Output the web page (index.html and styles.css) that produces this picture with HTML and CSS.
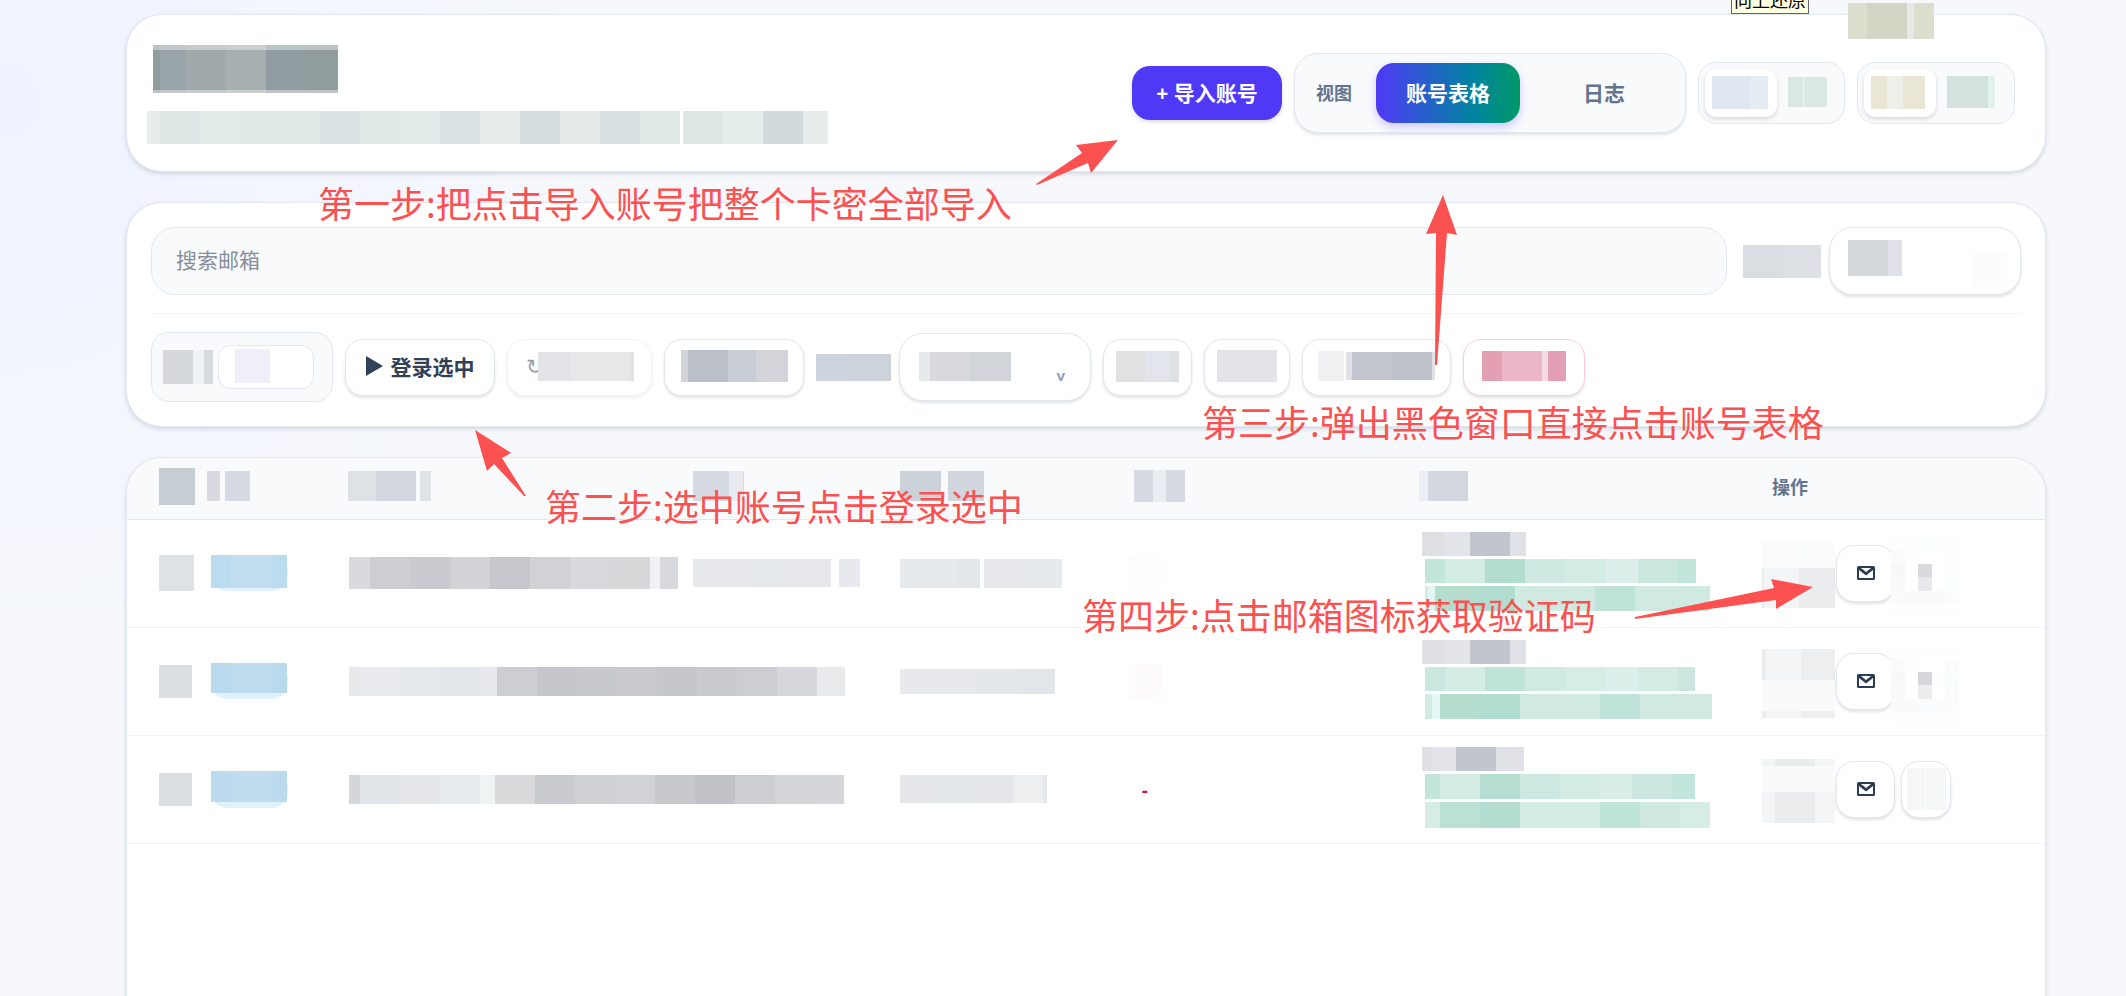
FILE: index.html
```
<!DOCTYPE html>
<html lang="zh-CN">
<head>
  <meta charset="UTF-8">
  <title>账号表格</title>
  <link rel="stylesheet" href="styles.css">
</head>
<body>
  <main class="page">
    <header class="card topbar">
      <div class="brand">
        <span class="mask title-mask" data-h="48" data-seg="7:#919c9e 26:#99a4aa 40:#a2a9ac 40:#a8afb1 40:#929da3 32:#919c9e"></span>
        <span class="mask" data-h="33" data-seg="13:#e7ecec 40:#dde7e6 40:#e2ece8 40:#dee8e6 40:#dfe8e7 40:#dae2e4 40:#dfe8e7 40:#e2ecea 40:#d8e1e4 40:#e6ece9 40:#d6dfe0 40:#e4ebea 40:#d8e1e2 40:#dee8e6 3:#fff 40:#dee7e5 40:#e3edeb 40:#d1dadc 25:#e6eceb"></span>
      </div>
      <div class="top-actions">
        <button class="btn-primary">+ 导入账号</button>
        <div class="tabs">
          <span class="tabs-label">视图</span>
          <button class="tab active">账号表格</button>
          <button class="tab">日志</button>
        </div>
        <div class="switch">
          <button class="switch-item on" aria-label="1"><span class="mask" data-h="33" data-seg="38:#e0e6f2 18:#e4edf4"></span></button>
          <button class="switch-item" aria-label="2"><span class="mask" data-h="30" data-seg="15:#dae8e5 1:#eef5f4 23:#dae8e5"></span></button>
        </div>
        <div class="switch wide">
          <button class="switch-item on" aria-label="1"><span class="mask" data-h="33" data-seg="16:#e9e6d5 16:#edf0e8 22:#e9e6d5"></span></button>
          <button class="switch-item" aria-label="2"><span class="mask" data-h="32" data-seg="41:#d3e1df 7:#e2f2ef"></span></button>
        </div>
      </div>
    </header>

    <section class="card filters">
      <div class="search-row">
        <input class="search" type="text" placeholder="搜索邮箱" aria-label="搜索邮箱">
        <span class="mask" data-h="33" data-seg="40:#dadde2 38:#dde0e5"></span>
        <div class="select-box">
          <select aria-label="1"><option></option></select>
          <div class="select-face high">
            <span class="mask" data-h="36" data-seg="40:#d4d8db 14:#dfe2e8"></span>
            <span class="mask low" data-h="34" data-seg="35:#fcfcfc"></span>
          </div>
        </div>
      </div>
      <div class="tool-row">
        <div class="count-box">
          <span class="mask" data-h="34" data-seg="30:#d5d8dc 11:#eff2f5 9:#d6d9dd"></span>
          <div class="count-field">
            <input type="text" aria-label="1">
            <span class="mask" data-h="34" data-seg="35:#f0eef9"></span>
          </div>
        </div>
        <button class="btn"><svg class="play" viewBox="0 0 17 20"><path d="M0 0L17 10L0 20Z"/></svg>登录选中</button>
        <button class="btn w-refresh" disabled><span class="refresh">↻</span><span class="mask" data-h="29" data-seg="33:#c9cad1 20:#d3d3d6 38:#d2d3d4 5:#c9cacf"></span></button>
        <button class="btn w-140" aria-label="3"><span class="mask" data-h="32" data-seg="7:#d3d4d9 40:#bbbfc7 28:#c8cdd6 32:#d3d3d9"></span></button>
        <span class="mask tool-label" data-h="27" data-seg="31:#cdd4dd 44:#ced2db"></span>
        <div class="select-box">
          <select aria-label="2"><option></option></select>
          <div class="select-face">
            <span class="mask" data-h="29" data-seg="11:#e8e9ed 40:#d8d8dd 41:#d1d5d9"></span>
            <span class="chevron">v</span>
          </div>
        </div>
        <button class="btn w-89" aria-label="4"><span class="mask" data-h="31" data-seg="29:#e0e1e3 25:#e2e5eb 9:#e0e1e3"></span></button>
        <button class="btn w-86" aria-label="5"><span class="mask" data-h="32" data-seg="60:#e2e4e8"></span></button>
        <button class="btn w-149" aria-label="6"><span class="mask" data-h="30" data-seg="26:#f1f1f3"></span><span class="mask" data-h="28" data-seg="6:#dfe1e7 40:#c3c6cf 40:#bec2cb 3:#dfe1e7"></span></button>
        <button class="btn danger w-122" aria-label="7"><span class="mask" data-h="30" data-seg="20:#e4a0b3 40:#ebb6c6 6:#f4dbe5 18:#e4a0b3"></span></button>
      </div>
    </section>

    <section class="card table-card">
      <table>
        <colgroup>
          <col class="c-check"><col class="c-tag"><col class="c-mail"><col class="c-key"><col class="c-time"><col class="c-code"><col class="c-status"><col>
        </colgroup>
        <thead>
          <tr>
            <th><span class="mask" data-h="37" data-seg="36:#c6ced4"></span></th>
            <th><span class="mask" data-h="30" data-seg="13:#d7dbe1 5:#f8fafc 25:#d6dae2"></span></th>
            <th><span class="mask" data-h="30" data-seg="28:#dde2e6 40:#d4d8e1 4:#f8fafc 11:#dee3e7"></span></th>
            <th><span class="mask" data-h="30" data-seg="36:#d6dbe3 14:#e7ebf0 1:#d6dbe3"></span></th>
            <th><span class="mask" data-h="30" data-seg="41:#cbd2da 7:#f8fafc 36:#d1d6de"></span></th>
            <th><span class="mask pad-code" data-h="32" data-seg="19:#d6dbe3 13:#e8edf2 19:#d6dbe3"></span></th>
            <th><span class="mask" data-h="30" data-seg="9:#e9eff4 40:#d3d7df"></span></th>
            <th><span class="th-text">操作</span></th>
          </tr>
        </thead>
        <tbody>
          <tr>
            <td><span class="mask" data-h="36" data-seg="35:#dfe2e5"></span></td>
            <td><span class="tag"><span class="mask" data-h="33" data-seg="20:#bbdbef 40:#c3def0 16:#bbdbef"></span></span></td>
            <td><span class="mask pad-mail" data-h="32" data-seg="21:#d9d9de 40:#cfcdd2 40:#cacbd0 40:#d2d3d7 40:#c7c8cd 40:#d1d2d6 40:#d8d9dd 40:#d6d7d8 10:#f0f1f4 18:#d8d9de"></span></td>
            <td><span class="mask" data-h="28" data-seg="58:#e8e9ed 34:#e5e9ec 46:#e6e8ec 8:#fff 21:#e8e9ee"></span></td>
            <td><span class="mask" data-h="29" data-seg="56:#e6eaed 24:#e3e7ea 4:#fff 40:#e8e8ed 38:#e6eaed"></span></td>
            <td><span class="mask" data-h="34" data-seg="33:#fdfdfd"></span></td>
            <td>
              <div class="status">
                <span class="mask" data-h="24" data-seg="22:#dfe0e4 26:#e3e4e9 40:#c1c5ce 16:#e0e1e6"></span>
                <span class="mask indent" data-h="24" data-seg="20:#c3e6da 40:#d3ece4 40:#b3ddcf 40:#cde9e2 40:#d2ebe3 33:#dbeee9 40:#cae7de 18:#c1e5da"></span>
                <span class="mask indent" data-h="25" data-seg="3:#d1ebe3 7:#e3f5f3 40:#b4ddce 40:#b0ddcf 80:#d0eae1 40:#bfe3d8 75:#d0eae1"></span>
              </div>
            </td>
            <td>
              <div class="row-actions">
                <div class="mask-stack">
                  <span class="mask" data-h="26" data-seg="37:#fbfbfc 36:#fafcfb"></span>
                  <span class="mask" data-h="40" data-seg="2:#ebecee 35:#f4f5f7 36:#ebecee"></span>
                </div>
                <button class="mail" aria-label="邮箱"><svg viewBox="0 0 18 14"><rect width="18" height="14" rx="1.5"/><path d="M2 4L9 9.5L16 4V12H2ZM4 2H14L9 6Z"/></svg></button>
                <div class="mask-grid">
                  <span class="mask" data-h="13" data-seg="14:#fefefe 40:#fcfdfd 14:#fefefe"></span>
                  <span class="mask" data-h="14" data-seg="14:#fafbfd 14:#fcfefe 26:#fff 14:#fcfcfd"></span>
                  <span class="mask" data-h="13" data-seg="14:#f8f8f9 13:#fff 14:#d8d9dd 13:#fff 14:#fbfcfd"></span>
                  <span class="mask" data-h="14" data-seg="14:#f9fafb 13:#fff 14:#e7e8eb 13:#fff 14:#fcfdfd"></span>
                  <span class="mask" data-h="13" data-seg="14:#fafcfb 40:#f9faf9 14:#fcfcfc"></span>
                  <span class="mask" data-h="13" data-seg="68:#fefefe"></span>
                </div>
              </div>
            </td>
          </tr>
          <tr>
            <td><span class="mask" data-h="33" data-seg="33:#dbdfe1"></span></td>
            <td><span class="tag deep"><span class="mask" data-h="30" data-seg="20:#b9daed 40:#bfdcee 16:#b9daed"></span></span></td>
            <td><span class="mask pad-mail" data-h="29" data-seg="11:#e8e9eb 40:#eaebee 40:#e5e9ec 40:#e4e8ec 17:#e7e9ee 40:#cdced2 40:#c6c7cd 40:#c8c9cd 40:#c9c9ce 40:#c6c7cb 40:#cacbcf 40:#cdced2 40:#d6d7dc 28:#e9eaec"></span></td>
            <td></td>
            <td><span class="mask" data-h="25" data-seg="76:#e8e9ed 41:#e4e8eb 38:#e2e6eb"></span></td>
            <td><span class="mask" data-h="34" data-seg="33:#fefbfc"></span></td>
            <td>
              <div class="status">
                <span class="mask" data-h="24" data-seg="22:#dfe0e4 26:#e3e4e9 40:#c1c5ce 16:#e0e1e6"></span>
                <span class="mask indent" data-h="24" data-seg="20:#cae7df 40:#d3ece4 40:#bfe3d8 40:#cfeae2 40:#d6ede5 33:#dbf0ea 40:#d2ebe3 17:#cae6de"></span>
                <span class="mask indent" data-h="25" data-seg="7:#d1ebe3 8:#e4f6f6 40:#b4ddce 40:#b0ddcf 80:#d0eae1 40:#bfe3d8 72:#d0eae1"></span>
              </div>
            </td>
            <td>
              <div class="row-actions">
                <div class="mask-stack">
                  <span class="mask" data-h="31" data-seg="4:#ebecee 35:#f4f5f7 34:#edeef0"></span>
                  <span class="mask" data-h="31" data-seg="73:#fafafb"></span>
                  <span class="mask" data-h="7" data-seg="4:#ebecee 35:#f4f5f7 34:#edeef0"></span>
                </div>
                <button class="mail" aria-label="邮箱"><svg viewBox="0 0 18 14"><rect width="18" height="14" rx="1.5"/><path d="M2 4L9 9.5L16 4V12H2ZM4 2H14L9 6Z"/></svg></button>
                <div class="mask-grid">
                  <span class="mask" data-h="13" data-seg="68:#fefefe"></span>
                  <span class="mask" data-h="14" data-seg="14:#fafbfd 14:#fdfefe 26:#fff 14:#fbfbfb"></span>
                  <span class="mask" data-h="13" data-seg="14:#f8f8f9 13:#fff 14:#d6d7dc 13:#fdfdff 14:#fbfcfc"></span>
                  <span class="mask" data-h="14" data-seg="14:#f8f9fb 13:#fff 14:#ecedef 13:#fff 14:#fafcfb"></span>
                  <span class="mask" data-h="13" data-seg="28:#fafafa 14:#f9fbfd 26:#fbfcfb"></span>
                  <span class="mask" data-h="13" data-seg="68:#fefefe"></span>
                </div>
              </div>
            </td>
          </tr>
          <tr>
            <td><span class="mask" data-h="33" data-seg="33:#dbdfe1"></span></td>
            <td><span class="tag deep"><span class="mask" data-h="31" data-seg="20:#bbdaee 40:#c1dcef 16:#bbdaee"></span></span></td>
            <td><span class="mask pad-mail" data-h="29" data-seg="11:#d5d6da 40:#e1e5ea 40:#e5e7eb 40:#e7ebee 15:#eff3f4 40:#d9d9dc 40:#cacbd0 40:#cfd0d4 40:#d1d2d6 40:#c8c9cd 40:#c1c2c7 40:#cdced2 40:#d3d4d8 29:#d5d6da"></span></td>
            <td></td>
            <td><span class="mask" data-h="28" data-seg="35:#e6e7eb 41:#e4e8eb 38:#e6e7eb 29:#edeef0 4:#e6e7ec"></span></td>
            <td><span class="dash">-</span></td>
            <td>
              <div class="status">
                <span class="mask" data-h="24" data-seg="10:#dfe0e4 24:#e3e4e9 40:#c1c5ce 28:#e0e1e6"></span>
                <span class="mask indent" data-h="25" data-seg="15:#c3e6da 40:#d3ede4 40:#b5ddd1 40:#cde7e1 40:#d2ebe3 32:#daeee8 40:#cce7df 23:#c1e5da"></span>
                <span class="mask indent" data-h="26" data-seg="15:#d6ede5 40:#bbe0d4 40:#b3ddd0 80:#d5ece4 40:#bfe4d8 40:#cfe9e1 30:#d6ede5"></span>
              </div>
            </td>
            <td>
              <div class="row-actions">
                <div class="mask-stack">
                  <span class="mask" data-h="7" data-seg="13:#f3f4f6 40:#ebecee 20:#f4f5f7"></span>
                  <span class="mask" data-h="26" data-seg="73:#f9fbfa"></span>
                  <span class="mask" data-h="31" data-seg="13:#f4f5f7 40:#ebecee 20:#f4f5f7"></span>
                </div>
                <button class="mail" aria-label="邮箱"><svg viewBox="0 0 18 14"><rect width="18" height="14" rx="1.5"/><path d="M2 4L9 9.5L16 4V12H2ZM4 2H14L9 6Z"/></svg></button>
                <button class="mail narrow" aria-label="8"><span class="mask" data-h="42" data-seg="18:#f5f6f6 1:#fff 20:#f5f6f6"></span></button>
              </div>
            </td>
          </tr>
        </tbody>
      </table>
    </section>
  </main>

  <div class="tooltip">向上还原</div>
  <span class="mask float-mask" data-h="36" data-seg="19:#dcdfce 40:#d3d6c4 7:#e8e9e6 20:#dcdfce"></span>

  <svg class="arrows" viewBox="0 0 2126 996">
    <path d="M1036 184L1082 153L1076 145L1118 140L1091 173L1088 163L1037 185Z"/>
    <path d="M475 430L511 453L502 458L526 496L524 496L494 464L487 471Z"/>
    <path d="M1443 195L1457 235L1447 233L1437 365L1435 365L1436 233L1426 234Z"/>
    <path d="M1635 617L1774 588L1771 579L1813 587L1776 609L1776 600L1635 619Z"/>
  </svg>
  <p class="note step-1">第一步:把点击导入账号把整个卡密全部导入</p>
  <p class="note step-2">第二步:选中账号点击登录选中</p>
  <p class="note step-3">第三步:弹出黑色窗口直接点击账号表格</p>
  <p class="note step-4">第四步:点击邮箱图标获取验证码</p>

  <script>
    // fill every mask with its coloured segments ("width:color ...")
    document.querySelectorAll(".mask").forEach((mask) => {
      mask.style.height = mask.dataset.h + "px";
      mask.dataset.seg.split(" ").forEach((seg) => {
        const [width, color] = seg.split(":");
        const part = document.createElement("i");
        part.style.width = width + "px";
        part.style.backgroundColor = color;
        mask.appendChild(part);
      });
    });
  </script>
</body>
</html>
```
FILE: styles.css
```
* {
  box-sizing: border-box;
}
body {
  margin: 0;
  min-height: 100vh;
  overflow: hidden;
  position: relative;
  font-family: "Noto Sans", "Noto Sans CJK SC", sans-serif;
  font-size: 21px;
  color: #314158;
  background: radial-gradient(circle at 0 10%, #eff3ff 0, #f6f8fc 620px);
}
button, input, select {
  font: inherit;
  color: inherit;
  margin: 0;
}
.page {
  height: 100vh;
  padding: 14px 80px 0 126px;
  display: flex;
  flex-direction: column;
  gap: 30px;
}
.card {
  background: #fff;
  border: 1px solid #e2e8f0;
  border-radius: 36px;
  box-shadow: 0 2px 4px rgba(15, 23, 42, 0.14);
}
.mask {
  display: flex;
  flex: none;
}
.mask i {
  flex: none;
}

/* top bar */
.topbar {
  display: flex;
  justify-content: space-between;
  align-items: flex-start;
  padding: 30px 30px 27px 20px;
}
.brand {
  display: flex;
  flex-direction: column;
  gap: 18px;
}
.title-mask {
  margin-left: 6px;
}
.title-mask i {
  border: solid rgba(255, 255, 255, 0.4);
  border-width: 5px 0 3px;
}
.top-actions {
  display: flex;
  align-items: center;
  gap: 12px;
  padding-top: 8px;
}
.btn-primary {
  height: 54px;
  width: 150px;
  padding: 0 0 2px;
  border: 0;
  border-radius: 18px;
  color: #fff;
  font-weight: 700;
  background: #4f39f6;
  box-shadow: 0 2px 4px rgba(15, 23, 42, 0.15);
}
.tabs {
  display: flex;
  align-items: center;
  height: 80px;
  padding: 0 9px 0 21px;
  gap: 12px;
  border: 1px solid #e2e8f0;
  border-radius: 24px;
  background: #f8fafc;
  box-shadow: 0 2px 3px rgba(15, 23, 42, 0.12);
}
.tabs-label {
  font-size: 18px;
  font-weight: 600;
  color: #62748e;
  margin-right: 12px;
  padding-bottom: 2px;
}
.tab {
  width: 144px;
  height: 60px;
  padding: 0 0 2px;
  border: 0;
  border-radius: 18px;
  font-weight: 700;
  color: #62748e;
  background: none;
}
.tab.active {
  color: #fff;
  background: linear-gradient(90deg, #4f39f6, #0084a0 68%, #009966);
  box-shadow: 0 4px 9px rgba(79, 57, 246, 0.25);
}
.switch {
  display: flex;
  align-items: center;
  width: 147px;
  height: 62px;
  padding-left: 6px;
  border: 1px solid #e2e8f0;
  border-radius: 18px;
  background: #f8fafc;
}
.switch.wide {
  width: 158px;
}
.switch-item {
  display: flex;
  align-items: center;
  height: 48px;
  padding: 0 11px 2px;
  border: 0;
  background: none;
}
.switch-item.on {
  width: 72px;
  padding: 0 7px 2px;
  border-radius: 12px;
  background: #fff;
  box-shadow: 0 2px 4px rgba(15, 23, 42, 0.14);
}

/* filters */
.filters {
  padding: 24px;
}
.search-row {
  display: flex;
  align-items: center;
  gap: 8px;
  padding-bottom: 18px;
  border-bottom: 1px solid #f1f5f9;
}
.search {
  flex: 1;
  height: 68px;
  margin-right: 8px;
  padding: 0 24px 2px;
  border: 1px solid #e2e8f0;
  border-radius: 24px;
  background: #f8fafc;
}
.search::placeholder {
  color: #868e9b;
}
.select-box {
  position: relative;
  width: 192px;
  height: 68px;
}
.select-box select {
  appearance: none;
  width: 100%;
  height: 100%;
  border: 1px solid #e2e8f0;
  border-radius: 24px;
  background: #fff;
  box-shadow: 0 2px 3px rgba(15, 23, 42, 0.12);
}
.select-face {
  position: absolute;
  inset: 0;
  display: flex;
  justify-content: space-between;
  align-items: center;
  padding: 0 26px 2px 20px;
  pointer-events: none;
}
.select-face.high {
  align-items: flex-start;
  padding: 13px 14px 0 19px;
}
.low {
  margin-top: 13px;
}
.chevron {
  font-size: 15px;
  font-weight: 700;
  line-height: 16px;
  color: #90a1b9;
  padding-top: 18px;
}
.tool-row {
  display: flex;
  align-items: center;
  gap: 12px;
  padding-top: 18px;
}
.count-box {
  display: flex;
  align-items: center;
  gap: 5px;
  width: 182px;
  height: 70px;
  padding-left: 11px;
  border: 1px solid #e2e8f0;
  border-radius: 18px;
  background: #f8fafc;
}
.count-field {
  position: relative;
}
.count-field input {
  display: block;
  width: 96px;
  height: 44px;
  border: 1px solid #e2e8f0;
  border-radius: 12px;
  background: #fff;
}
.count-field .mask {
  position: absolute;
  left: 17px;
  top: 4px;
}
.btn {
  display: flex;
  align-items: center;
  justify-content: center;
  gap: 2px;
  width: 150px;
  height: 57px;
  padding: 0 0 2px;
  border: 1px solid #e2e8f0;
  border-radius: 18px;
  font-weight: 700;
  color: #314158;
  background: #fff;
  box-shadow: 0 2px 3px rgba(15, 23, 42, 0.12);
}
.btn:disabled {
  opacity: 0.5;
  font-weight: 400;
  gap: 0;
}
.play {
  width: 17px;
  height: 20px;
  margin-right: 6px;
  fill: #314158;
}
.refresh {
  width: 12px;
}
.w-refresh {
  width: 145px;
}
.w-140 {
  width: 140px;
}
.w-89 {
  width: 89px;
}
.w-86 {
  width: 86px;
}
.w-149 {
  width: 149px;
}
.w-122 {
  width: 122px;
}
.danger {
  border-color: #ffccd3;
}
.tool-label {
  margin-right: -4px;
}

/* table */
.table-card {
  flex: 1;
  border-bottom: 0;
  border-radius: 36px 36px 0 0;
  overflow: hidden;
}
table {
  width: 100%;
  table-layout: fixed;
  border-collapse: collapse;
}
.c-check { width: 80px; }
.c-tag { width: 141px; }
.c-mail { width: 345px; }
.c-key { width: 207px; }
.c-time { width: 229px; }
.c-code { width: 290px; }
.c-status { width: 343px; }
th, td {
  padding: 0;
  text-align: left;
  vertical-align: middle;
}
th {
  height: 61px;
  padding-bottom: 4px;
  background: #f8fafc;
  border-bottom: 1px solid #e2e8f0;
}
th:first-child, td:first-child {
  padding-left: 32px;
}
td {
  height: 108px;
  border-bottom: 1px solid #f1f5f9;
}
.th-text {
  font-size: 18px;
  font-weight: 600;
  color: #62748e;
  padding-left: 10px;
}
.pad-code {
  padding-left: 5px;
}
.pad-mail {
  padding-left: 1px;
}
.tag {
  display: inline-block;
  vertical-align: middle;
  margin-left: 4px;
  padding: 0 1px 3px 0;
  border-radius: 16px;
  background: #dff2fe;
}
.tag.deep {
  padding-bottom: 6px;
}
.dash {
  font-size: 18px;
  font-weight: 700;
  color: #e60044;
  padding-left: 13px;
}
.status {
  display: flex;
  flex-direction: column;
  gap: 3px;
  padding: 0 0 3px 3px;
}
.indent {
  margin-left: 3px;
}
.row-actions {
  display: flex;
  align-items: center;
}
.mask-stack {
  padding-top: 4px;
}
.mail {
  display: flex;
  flex: none;
  align-items: center;
  justify-content: center;
  width: 59px;
  height: 57px;
  margin-left: 1px;
  padding: 0;
  border: 1px solid #e2e8f0;
  border-radius: 18px;
  background: #fff;
  box-shadow: 0 2px 3px rgba(15, 23, 42, 0.12);
}
.mail.narrow {
  width: 50px;
  margin-left: 6px;
}
.mail svg {
  width: 18px;
  height: 14px;
}
.mail rect {
  fill: #2b3d55;
}
.mail path {
  fill: #fff;
}
.mask-grid {
  margin-left: -4px;
  padding-top: 8px;
  z-index: 1;
}

/* things lying over the page */
.tooltip {
  position: absolute;
  left: 1731px;
  top: -13px;
  padding: 0 2px;
  border: 1px solid #646464;
  background: #ffffe1;
  color: #000;
  font-size: 18px;
  line-height: 25px;
}
.float-mask {
  position: absolute;
  left: 1848px;
  top: 3px;
}
.arrows {
  position: absolute;
  left: 0;
  top: 0;
  width: 2126px;
  height: 996px;
  fill: #fb5151;
  pointer-events: none;
}
.note {
  position: absolute;
  margin: 0;
  font-size: 36px;
  line-height: 48px;
  white-space: nowrap;
  color: #fb5151;
}
.step-1 {
  left: 318px;
  top: 181px;
}
.step-2 {
  left: 545px;
  top: 484px;
}
.step-3 {
  left: 1202px;
  top: 400px;
}
.step-4 {
  left: 1082px;
  top: 593px;
}
```
